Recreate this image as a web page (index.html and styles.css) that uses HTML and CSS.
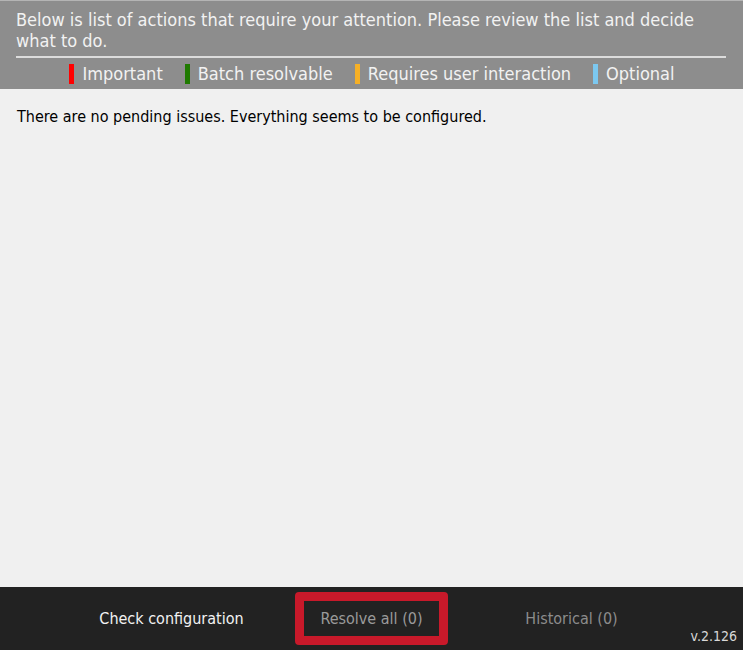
FILE: index.html
```html
<!DOCTYPE html>
<html>
<head>
<meta charset="utf-8">
<link rel="stylesheet" href="styles.css">
</head>
<body>
<div class="app">
  <header class="header">
    <p class="intro">Below is list of actions that require your attention. Please review the list and decide what to do.</p>
    <div class="legend">
      <span class="item"><span class="bar red"></span>Important</span>
      <span class="item"><span class="bar green"></span>Batch resolvable</span>
      <span class="item"><span class="bar orange"></span>Requires user interaction</span>
      <span class="item"><span class="bar blue"></span>Optional</span>
    </div>
  </header>
  <main class="content">
    <p class="empty">There are no pending issues. Everything seems to be configured.</p>
  </main>
  <footer class="footer">
    <div class="actions">
      <div class="action primary">Check configuration</div>
      <div class="action selected"><span class="box">Resolve all (0)</span></div>
      <div class="action muted">Historical (0)</div>
    </div>
    <span class="version">v.2.126</span>
  </footer>
</div>
</body>
</html>
```
FILE: styles.css
```css
html, body {
  margin: 0;
  padding: 0;
  width: 743px;
  height: 650px;
  overflow: hidden;
}
body {
  font-family: "DejaVu Sans Condensed", "DejaVu Sans", sans-serif;
}
.app {
  display: flex;
  flex-direction: column;
  height: 650px;
}
.header {
  box-sizing: border-box;
  background: #8d8d8d;
  border-top: 1px solid #b4b4b4;
  padding: 8px 17px 0 16px;
  height: 89px;
  color: #f2f2f2;
}
.intro {
  margin: 0;
  font-size: 18px;
  line-height: 21px;
  padding-bottom: 5px;
  border-bottom: 2px solid #dcdcdc;
}
.legend {
  display: flex;
  justify-content: center;
  gap: 22px;
  padding-top: 5px;
  font-size: 18px;
  line-height: 22px;
  padding-left: 2px;
}
.item {
  display: flex;
  align-items: center;
  gap: 8px;
}
.bar {
  display: inline-block;
  width: 5px;
  height: 20px;
}
.red { background: #ff0000; }
.green { background: #1f7a00; }
.orange { background: #f6b026; }
.blue { background: #7cc8f0; }
.content {
  flex: 1;
  background: #f0f0f0;
  padding: 0 17px;
}
.empty {
  margin: 0;
  padding-top: 18px;
  font-size: 16px;
  line-height: 20px;
  color: #000;
}
.footer {
  position: relative;
  height: 63px;
  background: #222222;
  display: flex;
  justify-content: center;
  align-items: center;
}
.actions {
  display: flex;
}
.action {
  width: 200px;
  display: flex;
  justify-content: center;
  align-items: center;
  font-size: 16px;
}
.primary { color: #f2f2f2; }
.muted { color: #8c8c8c; }
.box {
  box-sizing: border-box;
  width: 153px;
  height: 53px;
  border: 9px solid #c8192a;
  border-radius: 4px;
  display: flex;
  justify-content: center;
  align-items: center;
  color: #9a9a9a;
}
.version {
  position: absolute;
  right: 6px;
  bottom: 6px;
  font-size: 14px;
  color: #d8d8d8;
}
```
